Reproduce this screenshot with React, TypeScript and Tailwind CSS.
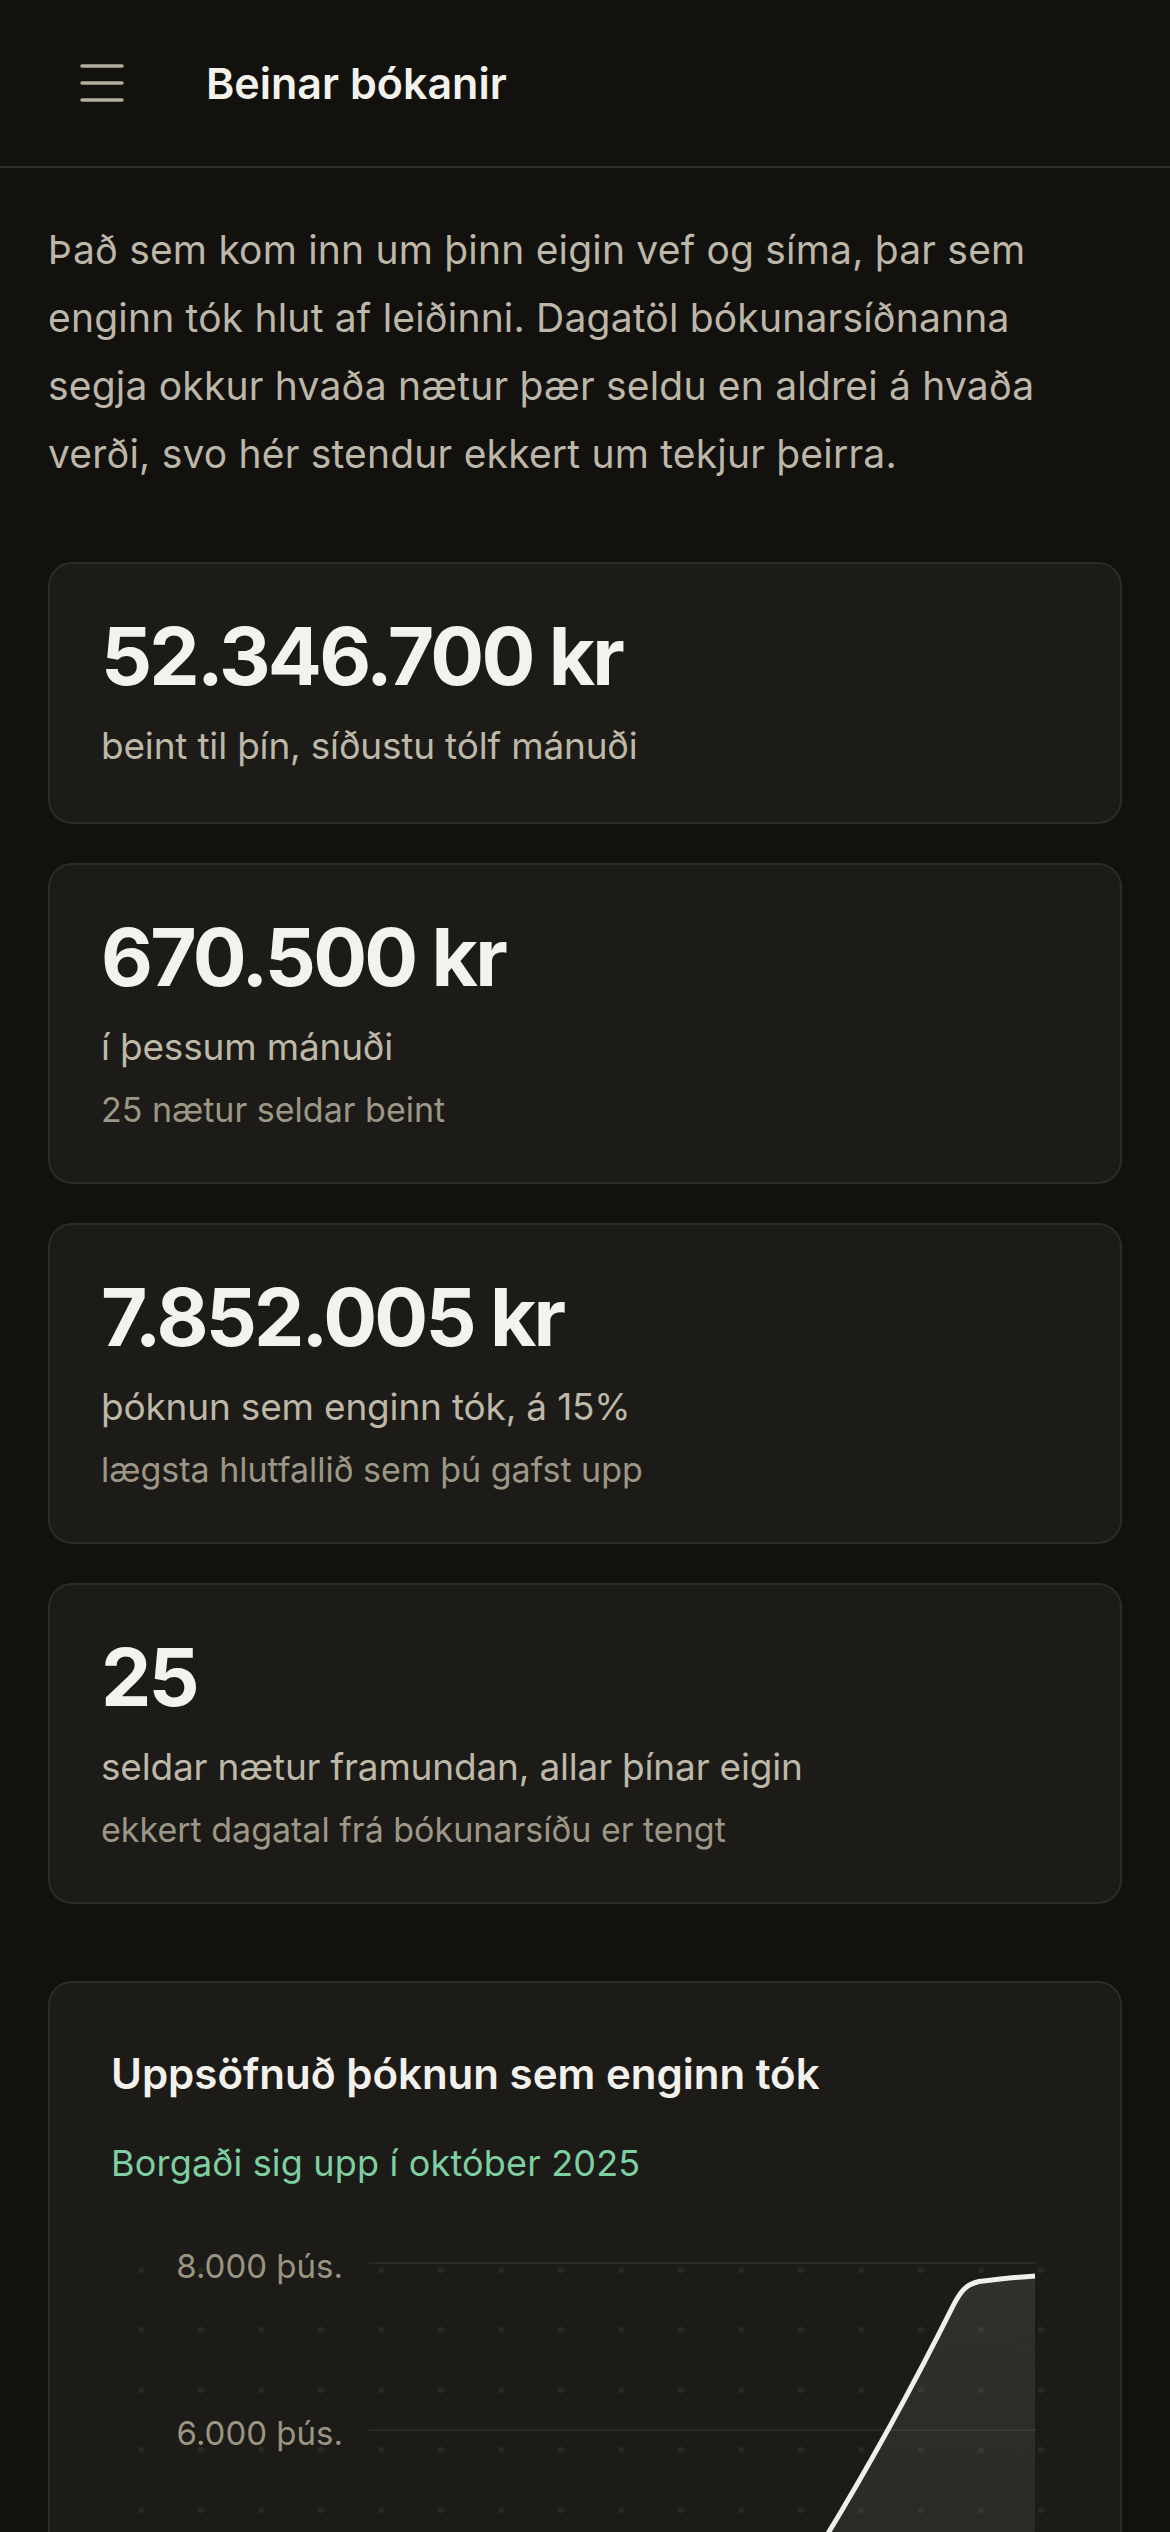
const stats = [
  {
    value: "52.346.700 kr",
    label: "beint til þín, síðustu tólf mánuði",
  },
  {
    value: "670.500 kr",
    label: "í þessum mánuði",
    note: "25 nætur seldar beint",
  },
  {
    value: "7.852.005 kr",
    label: "þóknun sem enginn tók, á 15%",
    note: "lægsta hlutfallið sem þú gafst upp",
  },
  {
    value: "25",
    label: "seldar nætur framundan, allar þínar eigin",
    note: "ekkert dagatal frá bókunarsíðu er tengt",
  },
];

const yTicks = [
  { label: "8.000 þús.", y: 23 },
  { label: "6.000 þús.", y: 190 },
  { label: "4.000 þús.", y: 357 },
  { label: "2.000 þús.", y: 524 },
  { label: "0 þús.", y: 691 },
];

const linePath =
  "M 560 691 C 575 600, 585 520, 600 470 C 680 360, 760 230, 842 66 C 850 50, 856 44, 868 41.5 C 885 39.5, 905 37.2, 924 36";

function MenuIcon() {
  return (
    <svg width="44" height="40" viewBox="0 0 44 40" fill="none">
      <path
        d="M2 3h40M2 20h40M2 37h40"
        stroke="#b3ae9e"
        strokeWidth="3.5"
        strokeLinecap="round"
      />
    </svg>
  );
}

function StatCard({ value, label, note }: { value: string; label: string; note?: string }) {
  return (
    <div className="rounded-[24px] border-2 border-[#2c2b25] bg-[#1c1b17] px-[51px] pt-[52px] pb-[48px]">
      <div className="text-[80px] font-bold leading-none tracking-[-0.035em] text-[#f4f2ed]">{value}</div>
      <div className="mt-[21px] text-[37px] leading-[57px] tracking-[-0.005em] text-[#bdb8a8]">{label}</div>
      {note && <div className="mt-[11px] text-[34px] leading-[48px] text-[#9c9786]">{note}</div>}
    </div>
  );
}

function SavingsChart() {
  return (
    <div className="mt-[51px] h-[760px] bg-[radial-gradient(circle,#29281f_3px,transparent_3.5px)] bg-size-[60px_60px]">
      <svg width="948" height="760" viewBox="0 0 948 760" className="block">
        <defs>
          <linearGradient id="fill" x1="0" y1="0" x2="0" y2="1">
            <stop offset="0%" stopColor="#f0eee8" stopOpacity="0.1" />
            <stop offset="100%" stopColor="#f0eee8" stopOpacity="0.02" />
          </linearGradient>
        </defs>
        {yTicks.map((t) => (
          <g key={t.label}>
            <line x1="258" x2="924" y1={t.y} y2={t.y} stroke="#2a2924" strokeWidth="2" />
            <text
              x="232"
              y={t.y + 15}
              textAnchor="end"
              fontSize="33"
              fill="#9a9482"
              fontFamily="Inter, 'Liberation Sans', sans-serif"
            >
              {t.label}
            </text>
          </g>
        ))}
        <path d={`${linePath} L 924 691 Z`} fill="url(#fill)" />
        <path d={linePath} fill="none" stroke="#f1efe9" strokeWidth="5" />
      </svg>
    </div>
  );
}

export default function App() {
  return (
    <div className="min-h-screen bg-[#12110e] font-['Inter','Liberation_Sans',sans-serif]">
      <header className="flex h-[168px] items-center gap-[82px] border-b-2 border-[#302f28] pl-[80px]">
        <MenuIcon />
        <h1 className="text-[43px] font-semibold leading-none text-[#f3f1ec]">Beinar bókanir</h1>
      </header>

      <main className="px-[48px] pt-[48px] pb-[80px]">
        <p className="max-w-[1056px] text-[39px] leading-[68px] tracking-[0.005em] text-[#bcb7a8]">
          Það sem kom inn um þinn eigin vef og síma, þar sem enginn tók hlut af leiðinni. Dagatöl
          bókunarsíðnanna segja okkur hvaða nætur þær seldu en aldrei á hvaða verði, svo hér stendur
          ekkert um tekjur þeirra.
        </p>

        <div className="mt-[74px] flex flex-col gap-[39px]">
          {stats.map((s) => (
            <StatCard key={s.value} {...s} />
          ))}
        </div>

        <section className="mt-[77px] rounded-[24px] border-2 border-[#2c2b25] bg-[#1c1b17] p-[61px]">
          <h2 className="text-[42px] font-semibold leading-[60px] text-[#f3f1ec]">Uppsöfnuð þóknun sem enginn tók</h2>
          <p className="mt-[33px] text-[36px] leading-[52px] tracking-[0.005em] text-[#7ecfa1]">
            Borgaði sig upp í október 2025
          </p>
          <SavingsChart />
        </section>
      </main>
    </div>
  );
}
